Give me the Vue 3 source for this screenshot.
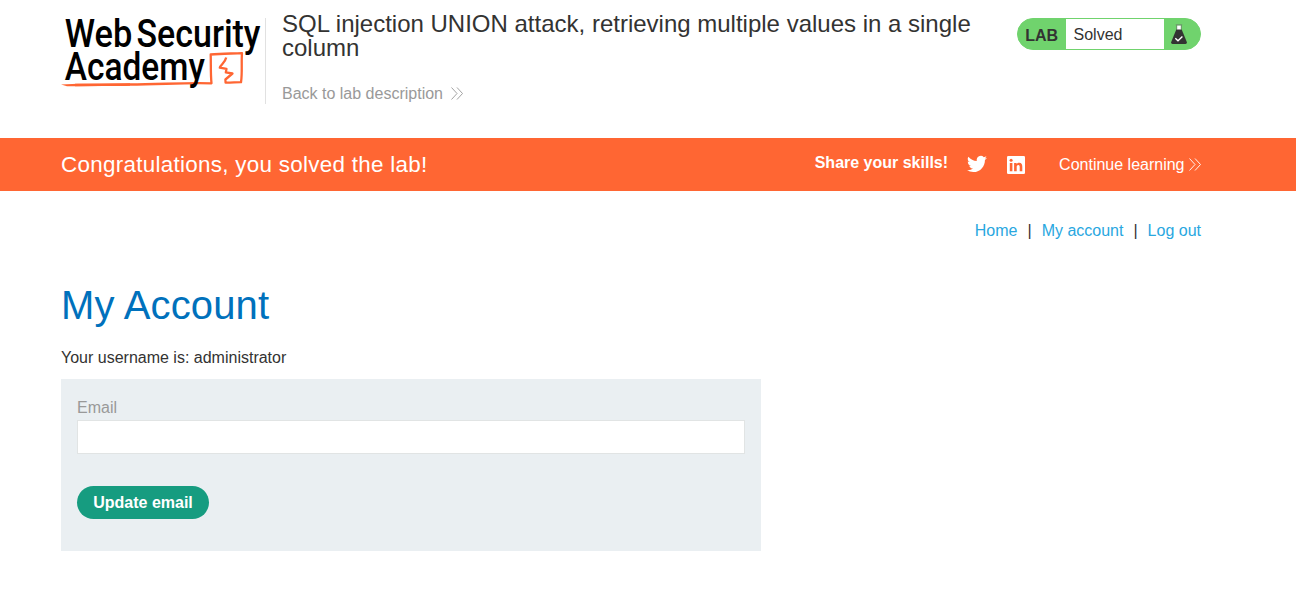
<script setup>
import { ref } from 'vue'

const email = ref('')
const links = ['Home', 'My account', 'Log out']
</script>

<template>
  <div class="page">
    <header class="header container">
      <svg class="logo" viewBox="61 10 202 82" role="img" aria-label="Web Security Academy">
        <path class="underline" d="M75 85 C94 84.600 112 85.100 130 84.500 C160 84.500 185 82.400 211.500 83.300 C210.500 74 211 64 210.700 54.500 C221 53.300 232 53.700 242 53.200 C241.200 62 242.500 73 241 82.200 C236 82.200 231 82.800 225.600 82.700 L225.400 79.500 L232.500 73.500 L225.800 72.400 L226.500 68.800 L219.800 67.600 C221 64.500 225 63 226.200 57.500" />
        <path class="tail" d="M61 84.600 L78 83.800 L130 83.300 V85.700 L78 86.300 L67 86.200 Z" />
        <g class="wordmark">
          <text x="64.800" y="47" textLength="67.500" lengthAdjust="spacingAndGlyphs">Web</text>
          <text x="136.500" y="47" textLength="124" lengthAdjust="spacingAndGlyphs">Security</text>
          <text x="64.800" y="79.500" textLength="140" lengthAdjust="spacingAndGlyphs">Academy</text>
        </g>
      </svg>
      <div class="title">
        <h2>SQL injection UNION attack, retrieving multiple values in a single column</h2>
        <a class="back">Back to lab description
          <svg class="chevrons" viewBox="0 0 12 13"><path d="M0.500 0.500 L6 6.500 L0.500 12.500 M6 0.500 L11.500 6.500 L6 12.500" /></svg>
        </a>
      </div>
      <div class="status">
        <span class="lab">LAB</span>
        <span class="state">Solved</span>
        <svg class="flask" viewBox="0 0 16 21">
          <path class="neck" d="M6 1.500 H10 V6 H6 Z" />
          <path class="rim" d="M4.800 0.800 H11.200 M5.700 1 V5.500 M10.300 1 V5.500" />
          <path class="glass" d="M5.300 5.500 H10.700 L15.800 18 Q16.400 20 14.500 20 H1.500 Q-0.400 20 0.200 18 Z" />
          <path class="check" d="M4.300 14.200 L7 16.700 L11.400 12.500" />
        </svg>
      </div>
    </header>

    <section class="banner">
      <div class="container banner-row">
        <h4>Congratulations, you solved the lab!</h4>
        <div class="share">
          <b>Share your skills!</b>
          <svg class="twitter" viewBox="0 2 24 20"><path d="M24 4.600a10 10 0 0 1-2.800.8 5 5 0 0 0 2.100-2.700 10 10 0 0 1-3.100 1.200 4.900 4.900 0 0 0-8.400 4.500A14 14 0 0 1 1.700 3.200a4.900 4.900 0 0 0 1.500 6.500 5 5 0 0 1-2.200-.6v.1a4.900 4.900 0 0 0 3.900 4.800 5 5 0 0 1-2.200.1 4.900 4.900 0 0 0 4.600 3.400A9.900 9.900 0 0 1 0 19.500 14 14 0 0 0 7.500 21.700c9.100 0 14-7.500 14-14v-.6A10 10 0 0 0 24 4.600z" /></svg>
          <svg class="linkedin" viewBox="0 0 18 18">
            <rect width="18" height="18" rx="1.300" />
            <path d="M2.800 7 H5.400 V15.200 H2.800 Z M7.100 7 H9.600 V8.100 C10.300 7.100 11.200 6.700 12.200 6.700 C14.700 6.700 15.300 8.400 15.300 10.700 V15.200 H12.700 V11.200 C12.700 10 12.600 9 11.300 9 C10 9 9.700 10 9.700 11.100 V15.200 H7.100 Z" />
            <circle cx="4.100" cy="4.200" r="1.500" />
          </svg>
          <a class="continue">Continue learning
            <svg class="chevrons" viewBox="0 0 12 13"><path d="M0.500 0.500 L6 6.500 L0.500 12.500 M6 0.500 L11.500 6.500 L6 12.500" /></svg>
          </a>
        </div>
      </div>
    </section>

    <main class="container">
      <nav>
        <template v-for="(link, i) in links" :key="link">
          <span v-if="i" class="bar">|</span>
          <a>{{ link }}</a>
        </template>
      </nav>
      <h1>My Account</h1>
      <p>Your username is: administrator</p>
      <form @submit.prevent>
        <label for="email">Email</label>
        <input id="email" v-model="email" type="email">
        <button type="submit">Update email</button>
      </form>
    </main>
  </div>
</template>

<style>
body { margin: 0; background: #fff; }
</style>

<style scoped>
.page {
  height: 607px;
  overflow: hidden;
  font: 16px/20px "Liberation Sans", Arial, sans-serif;
  color: #333332;
}
.container {
  box-sizing: border-box;
  width: 1140px;
  margin-left: 61px;
}
.header {
  display: flex;
  align-items: flex-start;
  height: 138px;
}
.logo {
  flex: none;
  width: 202px;
  height: 82px;
  margin-top: 10px;
  overflow: visible;
}
.wordmark {
  font: 500 38.500px Roboto, sans-serif;
  fill: #000;
}
.underline { fill: none; stroke: #f63; stroke-width: 2.300; stroke-linejoin: round; }
.tail { fill: #f63; }
.title {
  box-sizing: border-box;
  width: 712px;
  height: 86px;
  margin: 18px 0 0 2px;
  padding-left: 16px;
  border-left: 1px solid #e1e1e1;
}
h2 {
  margin: -6px 0 0;
  font-size: 24px;
  line-height: 24px;
  font-weight: 400;
}
.back {
  display: flex;
  align-items: center;
  gap: 8.500px;
  margin-top: 24px;
  color: #999;
}
.chevrons {
  width: 12px;
  height: 13px;
  margin-bottom: 1px;
  fill: none;
  stroke: currentColor;
  stroke-width: 0.900;
}
.back .chevrons { margin-bottom: 2px; }
.status {
  display: flex;
  align-items: center;
  box-sizing: border-box;
  width: 184px;
  height: 32px;
  margin: 18px 0 0 auto;
  border: 1px solid #70d36d;
  border-radius: 16px;
  background: #70d36d;
}
.lab {
  width: 48px;
  padding: 3px 0 0 7.200px;
  box-sizing: border-box;
  font-weight: 700;
}
.state {
  box-sizing: border-box;
  width: 98px;
  height: 30px;
  padding-left: 7.500px;
  line-height: 31px;
  background: #fff;
}
.flask { width: 16px; height: 21px; margin-left: 7px; }
.neck { fill: #fff; }
.rim { fill: none; stroke: #6d8a6b; stroke-width: 0.900; }
.glass { fill: #333332; }
.check { fill: none; stroke: #fff; stroke-width: 1.400; }
.banner { height: 53px; background: #f63; color: #fff; }
.banner-row {
  display: flex;
  align-items: center;
  justify-content: space-between;
  height: 53px;
}
h4 {
  margin: 1px 0 0;
  font-size: 22.400px;
  font-weight: 400;
  letter-spacing: 0.290px;
}
.share { display: flex; align-items: center; }
.share b { margin-top: -4px; }
.twitter { width: 20px; height: 18px; margin: -1px 0 0 18.500px; fill: #fff; }
.linkedin { width: 18px; height: 18px; margin: 0 0 0 20px; fill: #fff; }
.linkedin path, .linkedin circle { fill: #f63; }
.continue { display: flex; align-items: center; gap: 4.500px; margin-left: 34.500px; }
nav {
  display: flex;
  justify-content: flex-end;
  gap: 10px;
  padding-top: 30px;
  color: #29a7df;
}
.bar { color: #333332; }
h1 {
  margin: 39px 0 0;
  font-size: 40px;
  line-height: 50px;
  font-weight: 400;
  letter-spacing: 0.150px;
  color: #0071bc;
}
p { margin: 18px 0 11px; }
form {
  display: flex;
  flex-direction: column;
  align-items: flex-start;
  box-sizing: border-box;
  width: 700px;
  height: 172px;
  padding: 19px 16px;
  background: #eaeff2;
}
label { color: #999; }
input {
  box-sizing: border-box;
  width: 668px;
  height: 34px;
  margin: 2px 0 32px;
  border: 1px solid #e1e4e4;
  background: #fff;
  font: inherit;
}
button {
  width: 132px;
  height: 33px;
  padding: 0;
  border: 0;
  border-radius: 17px;
  background: #169c80;
  color: #fff;
  font: 700 16px/33px "Liberation Sans", Arial, sans-serif;
}
</style>
